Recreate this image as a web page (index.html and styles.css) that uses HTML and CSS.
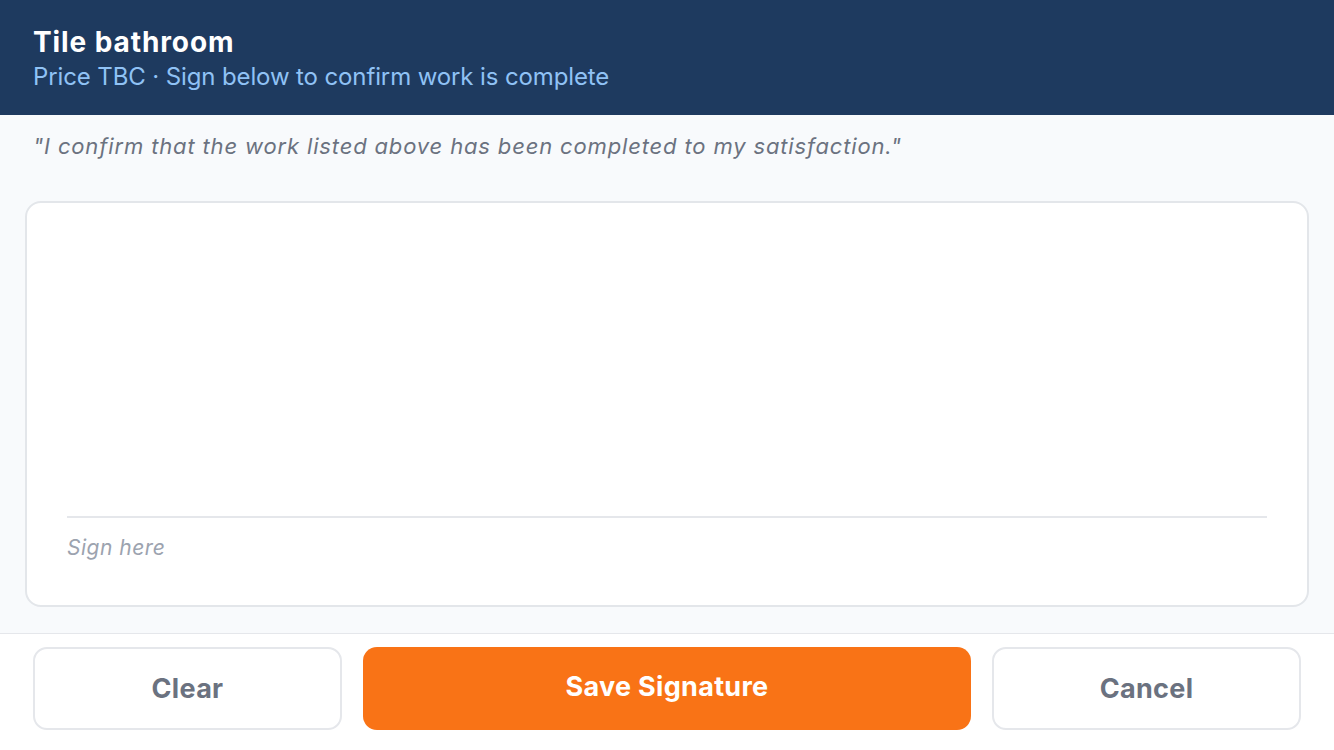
FILE: index.html
```html
<!DOCTYPE html>
<html>
<head>
<meta charset="utf-8">
<link rel="stylesheet" href="styles.css">
</head>
<body>
<div class="app">
  <header class="header">
    <h1 class="title">Tile bathroom</h1>
    <p class="subtitle">Price TBC · Sign below to confirm work is complete</p>
  </header>
  <main class="body">
    <p class="quote">"I confirm that the work listed above has been completed to my satisfaction."</p>
    <div class="pad">
      <div class="pad-line"></div>
      <div class="pad-hint">Sign here</div>
    </div>
  </main>
  <footer class="footer">
    <button class="btn btn-secondary">Clear</button>
    <button class="btn btn-primary">Save Signature</button>
    <button class="btn btn-secondary">Cancel</button>
  </footer>
</div>
</body>
</html>
```

FILE: styles.css
```css
* { box-sizing: border-box; }
html, body { margin: 0; padding: 0; }
body {
  width: 1334px;
  height: 750px;
  overflow: hidden;
  font-family: Inter, "Noto Sans", sans-serif;
  background: #f8fafc;
}
.app {
  display: flex;
  flex-direction: column;
  height: 750px;
}
.header {
  background: #1e3a5f;
  height: 115px;
  padding: 24px 33px 0;
}
.title {
  margin: 0;
  color: #ffffff;
  font-size: 28px;
  font-weight: 700;
  line-height: 36px;
  letter-spacing: 0.9px;
}
.subtitle {
  margin: 0;
  color: #90c2f5;
  font-size: 24px;
  line-height: 34px;
  letter-spacing: -0.12px;
}
.body {
  flex: 1;
  display: flex;
  flex-direction: column;
  padding: 0 25px 26px;
}
.quote {
  margin: 0;
  padding: 17px 8px 0;
  height: 86px;
  color: #6b7280;
  font-size: 22px;
  font-style: italic;
  line-height: 28px;
  letter-spacing: 0.85px;
}
.pad {
  flex: 1;
  background: #ffffff;
  border: 2px solid #e3e6ea;
  border-radius: 16px;
  display: flex;
  flex-direction: column;
  justify-content: flex-end;
  padding: 0 40px 45px;
}
.pad-line {
  height: 2px;
  background: #e5e7eb;
  margin-bottom: 18px;
}
.pad-hint {
  color: #9ca3af;
  font-size: 21px;
  font-style: italic;
  line-height: 24px;
  letter-spacing: 0.5px;
}
.footer {
  background: #ffffff;
  border-top: 1px solid #e5e7eb;
  height: 117px;
  display: grid;
  grid-template-columns: 309px 1fr 309px;
  gap: 21px;
  padding: 13px 33px 20px;
}
.btn {
  font-family: Inter, "Noto Sans", sans-serif;
  font-size: 27px;
  font-weight: 700;
  letter-spacing: 0.3px;
  border-radius: 14px;
  cursor: pointer;
}
.btn-secondary {
  background: #ffffff;
  border: 2px solid #e5e7eb;
  color: #6b7280;
}
.btn-primary {
  background: #f97316;
  border: none;
  color: #ffffff;
  padding-bottom: 6px;
}
```
